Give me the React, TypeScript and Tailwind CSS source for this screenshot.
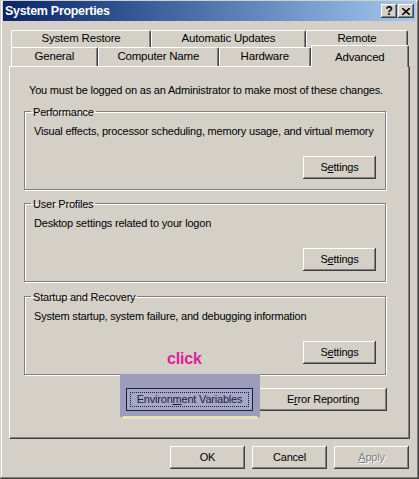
const raised =
  "shadow-[inset_-1px_-1px_0_#404040,inset_1px_1px_0_#ffffff,inset_-2px_-2px_0_#808080,inset_2px_2px_0_#d4d0c8]";

function Btn({ children, className = "", disabled = false }: { children: React.ReactNode; className?: string; disabled?: boolean }) {
  return (
    <div
      className={`h-[23px] flex items-center justify-center bg-[#d4d0c8] ${raised} ${
        disabled ? "text-[#808080] [text-shadow:1px_1px_0_#ffffff]" : "text-black"
      } ${className}`}
    >
      {children}
    </div>
  );
}

function Tab({ label, className = "" }: { label: string; className?: string }) {
  return (
    <div
      className={`h-full flex items-center justify-center border-t border-l border-white border-r border-r-[#404040] rounded-t-[2px] shadow-[inset_-1px_0_0_#808080] ${className}`}
    >
      {label}
    </div>
  );
}

function Group({ title, text, top }: { title: string; text: string; top: string }) {
  return (
    <fieldset
      className={`${top} ml-[14px] w-[362px] h-[84px] border border-[#808080] shadow-[1px_1px_0_#ffffff,inset_1px_1px_0_#ffffff] px-[9px] relative`}
    >
      <legend className="px-[2px] ml-[-3px] leading-[12px]">{title}</legend>
      <div className="mt-[5px] whitespace-nowrap">{text}</div>
      <div className="flex justify-end mt-[17px]">
        <Btn className="w-[73px]">
          <span>
            S<span className="underline">e</span>ttings
          </span>
        </Btn>
      </div>
    </fieldset>
  );
}

export default function App() {
  return (
    <div className="w-[419px] h-[479px] bg-[#d4d0c8] relative font-['Liberation_Sans',sans-serif] text-[11px] tracking-[-0.2px] text-black shadow-[inset_-1px_-1px_0_#404040,inset_1px_1px_0_#d4d0c8,inset_-2px_-2px_0_#808080,inset_2px_2px_0_#ffffff] overflow-hidden">
      {/* title bar */}
      <div className="mx-[3px] pt-[1px]">
        <div className="h-[20px] flex items-center justify-between bg-gradient-to-r from-[#0a246a] to-[#a6caf0] pl-[2px] pr-[2px]">
          <span className="text-white font-bold text-[12.5px] tracking-[-0.3px]">System Properties</span>
          <div className="flex gap-[1px]">
            <div className={`w-[16px] h-[14px] bg-[#d4d0c8] ${raised} flex items-center justify-center font-bold text-[12px] leading-none`}>?</div>
            <div className={`w-[16px] h-[14px] bg-[#d4d0c8] ${raised} flex items-center justify-center`}>
              <svg width="8" height="7" viewBox="0 0 8 7">
                <path d="M0 0 L8 7 M8 0 L0 7" stroke="#000" strokeWidth="1.6" />
              </svg>
            </div>
          </div>
        </div>
      </div>

      {/* tabs */}
      <div className="ml-[9px] w-[400px] mt-[9px] text-[11.5px]">
        <div className="flex h-[17px] pl-[2px] pr-[1px]">
          <Tab label="System Restore" className="w-[140px]" />
          <Tab label="Automatic Updates" className="w-[155px]" />
          <Tab label="Remote" className="w-[102px]" />
        </div>
        <div className="flex h-[19px] items-end">
          <Tab label="General" className="w-[87px] ml-[2px]" />
          <Tab label="Computer Name" className="w-[122px]" />
          <Tab label="Hardware" className="w-[92px]" />
          <div className="w-[99px] h-[22px] mb-[-1px] relative z-10 bg-[#d4d0c8] border-t border-l border-white border-r border-r-[#404040] rounded-t-[2px] shadow-[inset_-1px_0_0_#808080] flex justify-center pt-[3px]">
            Advanced
          </div>
        </div>
      </div>

      {/* panel */}
      <div className="ml-[9px] w-[401px] h-[373px] border-t border-l border-white border-r border-b border-r-[#404040] border-b-[#404040] shadow-[inset_-1px_-1px_0_#808080] flex flex-col">
        <div className="pl-[19px] mt-[15px] whitespace-nowrap">You must be logged on as an Administrator to make most of these changes.</div>
        <Group top="mt-[7px]" title="Performance" text="Visual effects, processor scheduling, memory usage, and virtual memory" />
        <Group top="mt-[8px]" title="User Profiles" text="Desktop settings related to your logon" />
        <Group top="mt-[9px]" title="Startup and Recovery" text="System startup, system failure, and debugging information" />
        <div className="flex justify-end gap-[6px] mr-[22px] mt-[13px] relative">
          <div className="absolute left-[110px] top-[-14px] w-[140px] h-[43px] bg-[#9d9db9]" />
          <div className="absolute left-[113px] top-[28px] w-[134px] h-[3px] bg-[#e8e4b8]" />
          <div className="relative w-[127px] h-[23px] bg-[#a8a8c6] border border-[#1c1c4c] flex items-center justify-center">
            <div className="absolute inset-[3px] border border-dotted border-[#1c1c4c]" />
            <span className="relative text-[#1c1c3c]">
              Environ<span className="underline">m</span>ent Variables
            </span>
          </div>
          <Btn className="w-[128px]">
            <span>
              E<span className="underline">r</span>ror Reporting
            </span>
          </Btn>
          <div className="absolute left-[157px] top-[-41px] text-[#e0209a] font-bold text-[16px]">click</div>
        </div>
      </div>

      {/* bottom buttons */}
      <div className="flex justify-end gap-[7px] mr-[10px] mt-[7px]">
        <Btn className="w-[75px]">OK</Btn>
        <Btn className="w-[75px]">Cancel</Btn>
        <Btn className="w-[75px]" disabled>
          <span>
            <span className="underline">A</span>pply
          </span>
        </Btn>
      </div>
    </div>
  );
}
